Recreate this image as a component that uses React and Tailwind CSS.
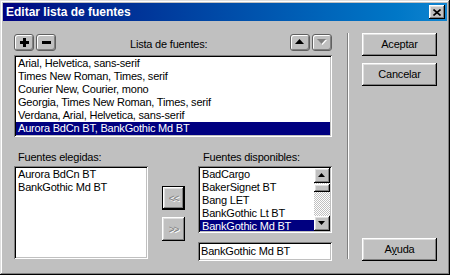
const raised =
  "bg-[#c0c0c0] shadow-[inset_-1px_-1px_0_#000,inset_1px_1px_0_#fff,inset_-2px_-2px_0_#808080,inset_2px_2px_0_#dfdfdf]";
const sunken =
  "bg-white shadow-[inset_1px_1px_0_#808080,inset_-1px_-1px_0_#fff,inset_2px_2px_0_#000,inset_-2px_-2px_0_#c0c0c0]";
const checker =
  "bg-[repeating-conic-gradient(#fff_0_25%,#c0c0c0_0_50%)] bg-[length:2px_2px]";
const roundBtn =
  "w-[20px] h-[17px] rounded-[3px] border border-[#606060] bg-[#c0c0c0] shadow-[inset_1px_1px_0_#fff,inset_-1px_-1px_0_#808080] flex items-center justify-center";

function Row({ children, selected }) {
  return (
    <div
      className={
        "h-[13px] leading-[13px] pl-[2px] whitespace-nowrap " +
        (selected ? "bg-[#000080] text-white" : "text-black")
      }
    >
      {children}
    </div>
  );
}

function Tri({ dir = "up", color = "#000", shadow = false, w = 7, h = 4 }) {
  const pts = dir === "up" ? `0,${h} ${w},${h} ${w / 2},0` : `0,0 ${w},0 ${w / 2},${h}`;
  return (
    <svg width={w + 1} height={h + 1} viewBox={`0 0 ${w + 1} ${h + 1}`}>
      {shadow && <polygon points={pts} fill="#fff" transform="translate(1,1)" />}
      <polygon points={pts} fill={color} />
    </svg>
  );
}

export default function App() {
  const mainList = [
    "Arial, Helvetica, sans-serif",
    "Times New Roman, Times, serif",
    "Courier New, Courier, mono",
    "Georgia, Times New Roman, Times, serif",
    "Verdana, Arial, Helvetica, sans-serif",
  ];
  const avail = ["BadCargo", "BakerSignet BT", "Bang LET", "BankGothic Lt BT"];
  return (
    <div className="w-[450px] h-[275px] bg-[#c0c0c0] p-[3px] flex flex-col shadow-[inset_-1px_-1px_0_#000,inset_1px_1px_0_#dfdfdf,inset_-2px_-2px_0_#808080,inset_2px_2px_0_#fff] font-['Liberation_Sans',Arial,sans-serif] text-[11px] tracking-[-0.2px] leading-[13px] text-black">
      {/* Title bar */}
      <div className="h-[18px] flex items-center bg-linear-to-r from-[#000080] to-[#1084d0] pl-[3px] pr-[2px]">
        <span className="flex-1 text-white font-bold text-[12px] tracking-normal leading-[18px]">
          Editar lista de fuentes
        </span>
        <div className={"w-[16px] h-[14px] flex items-center justify-center " + raised}>
          <svg width="8" height="7" viewBox="0 0 8 7">
            <path d="M0.5 0.5 L7.5 6.5 M7.5 0.5 L0.5 6.5" stroke="#000" strokeWidth="1.6" />
          </svg>
        </div>
      </div>

      {/* Body */}
      <div className="flex pt-[12px]">
        {/* Left column */}
        <div className="ml-[11px] w-[318px] flex flex-col">
          <div className="h-[18px] flex items-center">
            <div className={roundBtn}>
              <svg width="9" height="9" viewBox="0 0 9 9">
                <rect x="3" y="0" width="3" height="9" fill="#000" />
                <rect x="0" y="3" width="9" height="3" fill="#000" />
              </svg>
            </div>
            <div className={roundBtn + " ml-[2px]"}>
              <svg width="9" height="9" viewBox="0 0 9 9">
                <rect x="0" y="3" width="9" height="3" fill="#000" />
              </svg>
            </div>
            <span className="ml-[74px] pt-[4px]">Lista de fuentes:</span>
            <div className={roundBtn + " ml-auto"}>
              <Tri dir="up" w={9} h={5} />
            </div>
            <div className={roundBtn + " ml-[2px]"}>
              <Tri dir="down" w={9} h={5} color="#808080" shadow />
            </div>
          </div>

          <div className={"mt-[4px] h-[82px] p-[2px] " + sunken}>
            {mainList.map((t) => (
              <Row key={t}>{t}</Row>
            ))}
            <Row selected>Aurora BdCn BT, BankGothic Md BT</Row>
          </div>

          <div className="flex mt-[14px]">
            <div className="w-[134px] flex flex-col">
              <div className="h-[13px] pl-[4px]">Fuentes elegidas:</div>
              <div className={"mt-[2px] h-[93px] p-[2px] " + sunken}>
                <Row>Aurora BdCn BT</Row>
                <Row>BankGothic Md BT</Row>
              </div>
            </div>

            <div className="w-[50px] flex flex-col pt-[35px] pl-[14px]">
              <div className="w-[23px] h-[24px] border border-black">
                <div className={"w-full h-full flex items-center justify-center text-[#808080] [text-shadow:1px_1px_0_#fff] text-[10px] tracking-[-1px] " + raised}>
                  &lt;&lt;
                </div>
              </div>
              <div className={"mt-[7px] w-[23px] h-[24px] flex items-center justify-center text-[#808080] [text-shadow:1px_1px_0_#fff] text-[10px] tracking-[-1px] " + raised}>
                &gt;&gt;
              </div>
            </div>

            <div className="w-[134px] flex flex-col">
              <div className="h-[13px] pl-[5px]">Fuentes disponibles:</div>
              <div className={"mt-[2px] h-[67px] p-[2px] flex " + sunken}>
                <div className="flex-1 overflow-hidden">
                  {avail.map((t) => (
                    <Row key={t}>{t}</Row>
                  ))}
                  <Row selected>BankGothic Md BT</Row>
                </div>
                <div className="w-[16px] flex flex-col">
                  <div className={"h-[15px] flex items-center justify-center " + raised}>
                    <Tri dir="up" />
                  </div>
                  <div className={"h-[1px] " + checker} />
                  <div className={"h-[8px] " + raised} />
                  <div className={"flex-1 " + checker} />
                  <div className={"h-[15px] flex items-center justify-center " + raised}>
                    <Tri dir="down" />
                  </div>
                </div>
              </div>
              <div className={"mt-[9px] h-[19px] p-[2px] pl-[3px] leading-[15px] " + sunken}>
                BankGothic Md BT
              </div>
            </div>
          </div>
        </div>

        {/* Separator */}
        <div className="ml-[15px] w-[2px] h-[226px] border-l border-l-[#808080] border-r border-r-white" />

        {/* Right buttons */}
        <div className="ml-[13px] w-[75px] h-[228px] flex flex-col">
          <div className={"h-[23px] flex items-center justify-center " + raised}>Aceptar</div>
          <div className={"mt-[7px] h-[23px] flex items-center justify-center " + raised}>Cancelar</div>
          <div className={"mt-auto h-[23px] flex items-center justify-center " + raised}>
            <span>
              A<span className="underline">y</span>uda
            </span>
          </div>
        </div>
      </div>
    </div>
  );
}
